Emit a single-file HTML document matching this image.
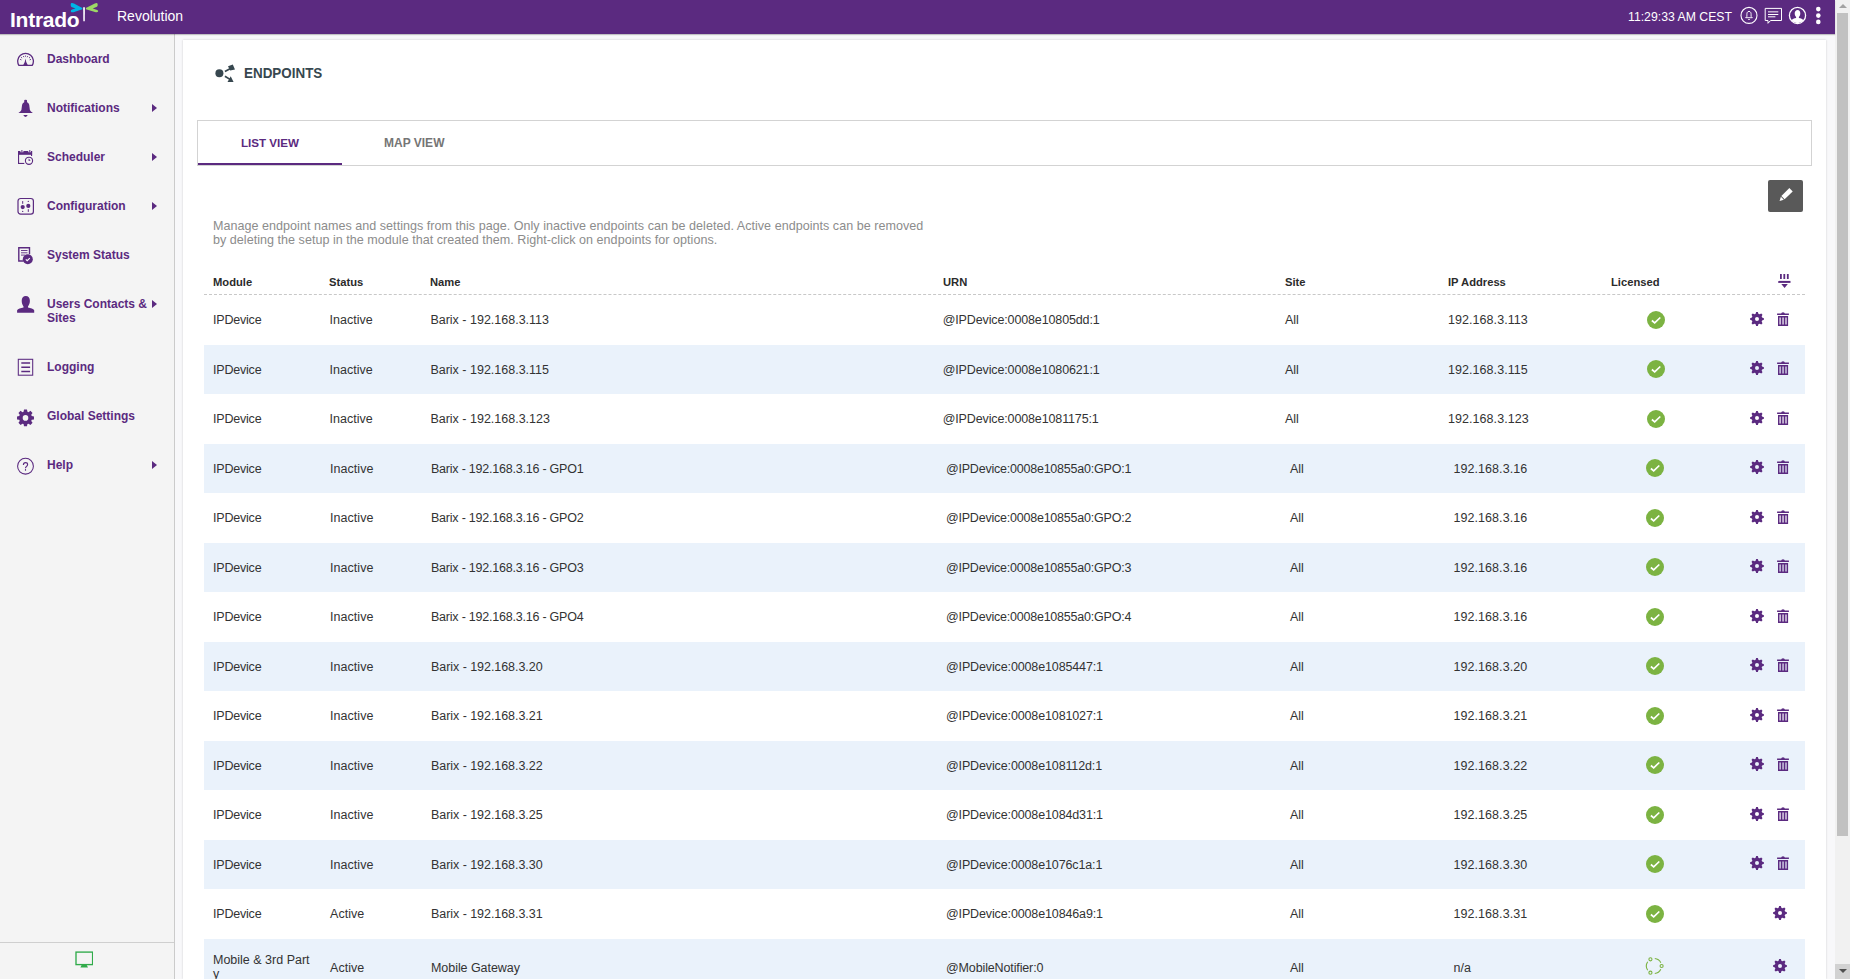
<!DOCTYPE html>
<html><head><meta charset="utf-8">
<style>
*{box-sizing:border-box;margin:0;padding:0}
html,body{width:1850px;height:979px;overflow:hidden;background:#f8f8fa;font-family:"Liberation Sans",sans-serif;}
.abs{position:absolute}
#top{position:absolute;left:0;top:0;width:1835px;height:34px;background:#5b2a80;box-shadow:0 1px 1px rgba(0,0,0,.22);z-index:5}
#side{position:absolute;left:0;top:34px;width:175px;height:945px;background:#f4f4f4;border-right:1px solid #cbcbcb}
.nav{position:absolute;left:47px;font-weight:bold;font-size:12px;color:#5b2a80;white-space:nowrap;line-height:14px}
.arr{position:absolute;left:152px;width:0;height:0;border-top:4px solid transparent;border-bottom:4px solid transparent;border-left:5px solid #5b2a80}
#card{position:absolute;left:183px;top:40px;width:1643px;height:939px;background:#fff;box-shadow:0 0 2px rgba(0,0,0,.18)}
.t{position:absolute;font-size:12.5px;color:#333;white-space:nowrap;line-height:14px}
.h{position:absolute;font-size:11.2px;font-weight:bold;color:#2b2b2b;white-space:nowrap;line-height:14px}
.rowbg{position:absolute;left:204px;width:1601px;background:#eaf2fb}
#sb{position:absolute;left:1835px;top:0;width:15px;height:979px;background:#f1f1f1}
</style></head><body>

<div id="top">
<div class="abs" style="left:10px;top:9px;font-size:21px;font-weight:bold;color:#fff;line-height:22px;letter-spacing:-0.25px">Intrado</div>
<svg class="abs" style="left:0px;top:0px" width="110" height="34" viewBox="0 0 110 34"><path d="M71.5 3.0Q72.6 2.8 74 3.4L82.3 7.9L82.3 9.2L73.5 12.2Q71.4 12.6 70.8 11.4Q70.6 10.1 72 9.6L75.5 8.4L71.5 6.9Q70.6 6.2 70.7 4.6Q70.8 3.2 71.5 3.0Z" fill="#00b4e6"/><path d="M96.4 3.0Q97.6 3.0 97.7 4.4Q97.8 6.2 96.9 6.8L92.8 8.5L97.2 9.9Q98.5 10.6 98.1 11.6Q97.5 12.6 95.8 12.2L85.9 9.3L85.9 8.1L94.8 3.4Q95.6 3.0 96.4 3.0Z" fill="#9dd866"/><path d="M83.2 7.6 Q84 6.6 84.9 7.6 L84.8 21.2 L83.3 21.2Z" fill="#fff"/></svg>
<div class="abs" style="left:117px;top:8px;font-size:14px;color:#fff;line-height:16px">Revolution</div>
<div class="abs" style="left:1628px;top:10px;font-size:12.25px;color:#fff;line-height:14px">11:29:33 AM CEST</div>
<svg class="abs" style="left:1735px;top:0" width="95" height="34" viewBox="0 0 95 34"><circle cx="14" cy="15.4" r="8" fill="none" stroke="#fff" stroke-width="1.1"/><path d="M14 11.4C12.4 11.4 11.9 12.8 11.9 14.3L11.9 16.4L10.7 17.7L17.3 17.7L16.1 16.4L16.1 14.3C16.1 12.8 15.6 11.4 14 11.4Z" fill="none" stroke="#fff" stroke-width="0.95"/><rect x="13.2" y="19" width="1.6" height="0.9" fill="#fff"/><path d="M30.2 8.4H46.5V20.5H35.6L33 23.3V20.5H30.2Z" fill="none" stroke="#fff" stroke-width="1"/><path d="M33 11.8H43.3" stroke="#fff" stroke-opacity=".7" stroke-width="1.4"/><path d="M33 14.5H43.3M33 16.8H40.4" stroke="#fff" stroke-width="1"/><circle cx="62.5" cy="15.4" r="8.1" fill="none" stroke="#fff" stroke-width="1.3"/><path d="M62.6 9.9C64.3 9.9 65.3 11.3 65.3 13.2C65.3 14.8 64.7 16.2 63.9 17L63.9 17.9C65.8 18.3 67.6 18.9 68.6 20.2A7.8 7.8 0 0 1 56.4 20.2C57.4 18.9 59.2 18.3 61.1 17.9L61.1 17C60.3 16.2 59.7 14.8 59.7 13.2C59.7 11.3 60.9 9.9 62.6 9.9Z" fill="#fff"/><circle cx="83.3" cy="9.1" r="2.3" fill="#fff"/><circle cx="83.3" cy="15.6" r="2.3" fill="#fff"/><circle cx="83.3" cy="21.9" r="2.3" fill="#fff"/></svg>
</div>
<div id="side"></div>
<div class="nav" style="top:51.5px">Dashboard</div>
<div class="nav" style="top:100.5px">Notifications</div>
<div class="arr" style="top:103.5px"></div>
<div class="nav" style="top:149.5px">Scheduler</div>
<div class="arr" style="top:152.5px"></div>
<div class="nav" style="top:198.5px">Configuration</div>
<div class="arr" style="top:201.5px"></div>
<div class="nav" style="top:247.5px">System Status</div>
<div class="nav" style="top:296.5px">Users Contacts &amp;<br>Sites</div>
<div class="arr" style="top:299.5px"></div>
<div class="nav" style="top:359.5px">Logging</div>
<div class="nav" style="top:408.5px">Global Settings</div>
<div class="nav" style="top:457.5px">Help</div>
<div class="arr" style="top:460.5px"></div>
<svg class="abs" style="left:17px;top:52px" width="18" height="15" viewBox="0 0 18 15"><path d="M1.9 13.4 A7.85 7.85 0 1 1 15.2 13.4 Z" fill="none" stroke="#5b2a80" stroke-width="1.3" stroke-linejoin="round"/><path d="M8.5 6.6 Q8.9 11 11 13.4 L6 13.4 Q8.1 11 8.5 6.6Z" fill="#5b2a80"/><path d="M3.2 7.4l1.2.5M4.2 5.3l.9.8M6.4 4.1l.5 1M8.55 3.6v1.1M10.7 4.2l-.5 1M12.9 5.3l-.9.8M13.9 7.4l-1.2.5" stroke="#5b2a80" stroke-width="1"/></svg>
<svg class="abs" style="left:17px;top:99px" width="17" height="19" viewBox="0 0 17 19"><path d="M7.3 0.9Q8.6 0.6 9.9 0.9L10.1 3.2Q11.8 3.8 12.2 5.8L12.9 11Q13.5 12.8 15.9 13.9L1.4 13.9Q3.8 12.8 4.4 11L5.1 5.8Q5.5 3.8 7.2 3.2Z" fill="#5b2a80"/><path d="M6.3 16.1L10.7 16.1Q10 17.9 8.5 17.9Q7 17.9 6.3 16.1Z" fill="#5b2a80"/></svg>
<svg class="abs" style="left:17px;top:149px" width="18" height="17" viewBox="0 0 18 17"><rect x="1" y="2" width="14.1" height="3.8" fill="#5b2a80"/><rect x="3.4" y="1" width="3" height="2.2" fill="#f4f4f4"/><rect x="11.3" y="1" width="3" height="2.2" fill="#f4f4f4"/><rect x="4.4" y="1" width="1" height="2.1" fill="#5b2a80"/><rect x="12.3" y="1" width="1" height="2.1" fill="#5b2a80"/><rect x="1" y="2" width="1.1" height="13" fill="#5b2a80"/><rect x="1" y="13.9" width="6.3" height="1.1" fill="#5b2a80"/><rect x="14" y="2" width="1.1" height="5" fill="#5b2a80"/><circle cx="12" cy="11.8" r="3.6" fill="#f4f4f4" stroke="#5b2a80" stroke-width="1.1"/><path d="M11.6 9.6L11.6 12.1L13.6 11.4Z" fill="#5b2a80"/></svg>
<svg class="abs" style="left:17px;top:197px" width="18" height="19" viewBox="0 0 18 19"><rect x="1" y="1.5" width="15.4" height="15.7" rx="2.6" fill="none" stroke="#5b2a80" stroke-width="1.2"/><path d="M5.7 4.1V6.8M11.3 12.2V14.9" stroke="#5b2a80" stroke-width="1"/><circle cx="5.7" cy="10.1" r="2.1" fill="#5b2a80"/><circle cx="11.3" cy="8.9" r="2.1" fill="#5b2a80"/><circle cx="5.7" cy="14.4" r=".65" fill="#5b2a80"/><circle cx="11.3" cy="4.4" r=".65" fill="#5b2a80"/></svg>
<svg class="abs" style="left:18px;top:247px" width="18" height="18" viewBox="0 0 18 18"><path d="M11.5 7V0.8H0.8V14H5.5" fill="none" stroke="#5b2a80" stroke-width="1.4"/><path d="M3 3.5h6.5M3 5.8h6.5M3 8.1h4" stroke="#5b2a80" stroke-width="0.9"/><circle cx="9.8" cy="12.3" r="5" fill="#5b2a80"/><path d="M7.8 12.4l1.4 1.3 2.6-2.6" fill="none" stroke="#fff" stroke-width="1.1"/></svg>
<svg class="abs" style="left:17px;top:295px" width="18" height="18" viewBox="0 0 18 18"><path d="M8.8 1C11.3 1 12.9 2.8 12.9 5.8C12.9 8 12 10.2 11 11.4L11 12.6C13.5 13.2 16.6 13.8 17.2 15.3L17.2 17.7L0.1 17.7L0.1 15.3C0.8 13.8 3.9 13.2 6.5 12.6L6.5 11.4C5.5 10.2 4.7 8 4.7 5.8C4.7 2.8 6.3 1 8.8 1Z" fill="#5b2a80"/></svg>
<svg class="abs" style="left:17px;top:358px" width="18" height="19" viewBox="0 0 18 19"><rect x="1.3" y="1.3" width="14.4" height="15.9" fill="none" stroke="#5b2a80" stroke-width="1.05"/><path d="M4.3 5H13.1M4.3 9.3H13.1M4.3 13.5H13.1" stroke="#5b2a80" stroke-width="1.6"/></svg>
<svg class="abs" style="left:17px;top:409px" width="18" height="19" viewBox="0 0 18 19"><path fill-rule="evenodd" fill="#5b2a80" d="M14.71 6.97 L16.97 7.41 L16.97 10.39 L14.71 10.83 L14.25 11.93 L15.54 13.84 L13.44 15.94 L11.53 14.65 L10.43 15.11 L9.99 17.37 L7.01 17.37 L6.57 15.11 L5.47 14.65 L3.56 15.94 L1.46 13.84 L2.75 11.93 L2.29 10.83 L0.03 10.39 L0.03 7.41 L2.29 6.97 L2.75 5.87 L1.46 3.96 L3.56 1.86 L5.47 3.15 L6.57 2.69 L7.01 0.43 L9.99 0.43 L10.43 2.69 L11.53 3.15 L13.44 1.86 L15.54 3.96 L14.25 5.87Z M8.50 6.10 A2.80 2.80 0 1 0 8.50 11.70 A2.80 2.80 0 1 0 8.50 6.10 Z"/></svg>
<svg class="abs" style="left:17px;top:457px" width="18" height="19" viewBox="0 0 18 19"><circle cx="8.5" cy="9.2" r="7.9" fill="none" stroke="#5b2a80" stroke-width="1.05"/><path d="M6.4 8Q6.4 5.6 8.5 5.6Q10.6 5.6 10.6 7.5Q10.6 8.7 9.5 9.4Q8.5 10 8.5 11.2" fill="none" stroke="#5b2a80" stroke-width="1.15"/><rect x="7.95" y="12.1" width="1.1" height="1.6" fill="#5b2a80"/></svg>
<div class="abs" style="left:0;top:942px;width:174px;height:1px;background:#cfcfcf"></div>
<svg class="abs" style="left:75px;top:951px" width="18" height="17" viewBox="0 0 18 17"><rect x="1" y="1.1" width="16.6" height="12.5" fill="none" stroke="#30ab4a" stroke-width="1.35"/><path d="M5.4 16.6h7.6l-1.3-2.6H6.6z" fill="#30ab4a"/></svg>
<div id="card"></div>
<svg class="abs" style="left:212px;top:60px" width="28" height="26" viewBox="0 0 28 26"><circle cx="7.4" cy="13.3" r="4" fill="#37474f"/><path d="M12.9 11.6L18.5 8.6M12.9 16.2L18 19.4" stroke="#37474f" stroke-width="1.7"/><path d="M16 6.3L20.8 4.4L23 9.4L18.2 10.6Z" fill="#37474f"/><path d="M15.5 21.9L21.6 21.9L18.7 16.3Z" fill="#37474f"/></svg>
<div class="abs" style="left:244px;top:65px;font-size:15px;font-weight:bold;color:#37474f;line-height:16px;transform:scaleX(0.895);transform-origin:0 0">ENDPOINTS</div>
<div class="abs" style="left:197px;top:120px;width:1615px;height:46px;border:1px solid #d3d3d3;background:#fff"></div>
<div class="abs" style="left:198px;top:163px;width:144px;height:2px;background:#5b2a80"></div>
<div class="abs" style="left:241px;top:136px;font-size:11.6px;font-weight:bold;color:#5b2a80;line-height:14px">LIST VIEW</div>
<div class="abs" style="left:384px;top:136px;font-size:12px;font-weight:bold;color:#757575;line-height:14px">MAP VIEW</div>
<div class="abs" style="left:1768px;top:180px;width:35px;height:32px;background:#595959;border-radius:2px"></div>
<svg class="abs" style="left:1778.5px;top:188px" width="14" height="14" viewBox="0 0 14 14"><path d="M10.4 0.1L13.7 3.4L5.6 11.2L2.4 8Z" fill="#fff"/><path d="M1.9 8.8L4.8 11.7L0.6 13Z" fill="#fff"/></svg>
<div class="abs" style="left:213px;top:218.5px;font-size:12.55px;color:#8c8c8c;line-height:14px;letter-spacing:0.03px;white-space:nowrap">Manage endpoint names and settings from this page. Only inactive endpoints can be deleted. Active endpoints can be removed<br>by deleting the setup in the module that created them. Right-click on endpoints for options.</div>
<div class="h" style="left:213px;top:275px">Module</div>
<div class="h" style="left:329px;top:275px">Status</div>
<div class="h" style="left:430px;top:275px">Name</div>
<div class="h" style="left:943px;top:275px">URN</div>
<div class="h" style="left:1285px;top:275px">Site</div>
<div class="h" style="left:1448px;top:275px">IP Address</div>
<div class="h" style="left:1611px;top:275px">Licensed</div>
<svg class="abs" style="left:1778px;top:274px" width="13" height="15" viewBox="0 0 13 15"><path d="M2.9 0v5M6.3 0v5M9.8 0v5" stroke="#5b2a80" stroke-width="1.8"/><path d="M0.3 7.9h12.2" stroke="#5b2a80" stroke-width="2"/><path d="M3.3 10h6.5l-3.25 4z" fill="#5b2a80"/></svg>
<div class="abs" style="left:204px;top:294px;width:1601px;height:0;border-top:1px dashed #c8c8c8"></div>
<div class="t" style="left:213.0px;top:312.5px;letter-spacing:-0.2px">IPDevice</div>
<div class="t" style="left:329.4px;top:312.5px;letter-spacing:0.05px">Inactive</div>
<div class="t" style="left:430.4px;top:312.5px;letter-spacing:0.00px">Barix - 192.168.3.113</div>
<div class="t" style="left:942.7px;top:312.5px;letter-spacing:-0.13px">@IPDevice:0008e10805dd:1</div>
<div class="t" style="left:1285.0px;top:312.5px;letter-spacing:0.00px">All</div>
<div class="t" style="left:1448.0px;top:312.5px;letter-spacing:0.06px">192.168.3.113</div>
<svg style="position:absolute;left:1647.0px;top:310.5px" width="18" height="18" viewBox="0 0 18 18"><circle cx="9" cy="9" r="9" fill="#7cb342"/><path d="M4.9 9.5L7.7 11.9L13.3 6.5" fill="none" stroke="#fff" stroke-width="1.7"/></svg>
<svg style="position:absolute;left:1750.20px;top:312.05px" width="14" height="14" viewBox="0 0 14 14"><path fill="#5b2a80" fill-rule="evenodd" d="M12.08 5.48 L13.90 6.17 L13.90 7.83 L12.08 8.52 L11.66 9.52 L12.47 11.29 L11.29 12.47 L9.52 11.66 L8.52 12.08 L7.83 13.90 L6.17 13.90 L5.48 12.08 L4.48 11.66 L2.71 12.47 L1.53 11.29 L2.34 9.52 L1.92 8.52 L0.10 7.83 L0.10 6.17 L1.92 5.48 L2.34 4.48 L1.53 2.71 L2.71 1.53 L4.48 2.34 L5.48 1.92 L6.17 0.10 L7.83 0.10 L8.52 1.92 L9.52 2.34 L11.29 1.53 L12.47 2.71 L11.66 4.48Z M7 5 A2 2 0 1 0 7 9 A2 2 0 1 0 7 5Z"/></svg>
<svg style="position:absolute;left:1777.00px;top:312.30px" width="13" height="14" viewBox="0 0 13 14"><path fill="#5b2a80" d="M0.1 1.6H11.9V2.9H0.1Z M4 1.8Q4.3 0.3 6 0.3Q7.7 0.3 8 1.8Z"/><path fill="#5b2a80" fill-rule="evenodd" d="M1 4H11.1V13.9H1Z M2.5 5.6h1.2v6.8h-1.2z M5.45 5.6h1.2v6.8h-1.2z M8.4 5.6h1.2v6.8h-1.2z"/></svg>
<div class="rowbg" style="top:345px;height:49px"></div>
<div class="t" style="left:213.0px;top:362.5px;letter-spacing:-0.2px">IPDevice</div>
<div class="t" style="left:329.4px;top:362.5px;letter-spacing:0.05px">Inactive</div>
<div class="t" style="left:430.4px;top:362.5px;letter-spacing:0.00px">Barix - 192.168.3.115</div>
<div class="t" style="left:942.7px;top:362.5px;letter-spacing:-0.13px">@IPDevice:0008e1080621:1</div>
<div class="t" style="left:1285.0px;top:362.5px;letter-spacing:0.00px">All</div>
<div class="t" style="left:1448.0px;top:362.5px;letter-spacing:0.06px">192.168.3.115</div>
<svg style="position:absolute;left:1647.0px;top:359.5px" width="18" height="18" viewBox="0 0 18 18"><circle cx="9" cy="9" r="9" fill="#7cb342"/><path d="M4.9 9.5L7.7 11.9L13.3 6.5" fill="none" stroke="#fff" stroke-width="1.7"/></svg>
<svg style="position:absolute;left:1750.20px;top:361.05px" width="14" height="14" viewBox="0 0 14 14"><path fill="#5b2a80" fill-rule="evenodd" d="M12.08 5.48 L13.90 6.17 L13.90 7.83 L12.08 8.52 L11.66 9.52 L12.47 11.29 L11.29 12.47 L9.52 11.66 L8.52 12.08 L7.83 13.90 L6.17 13.90 L5.48 12.08 L4.48 11.66 L2.71 12.47 L1.53 11.29 L2.34 9.52 L1.92 8.52 L0.10 7.83 L0.10 6.17 L1.92 5.48 L2.34 4.48 L1.53 2.71 L2.71 1.53 L4.48 2.34 L5.48 1.92 L6.17 0.10 L7.83 0.10 L8.52 1.92 L9.52 2.34 L11.29 1.53 L12.47 2.71 L11.66 4.48Z M7 5 A2 2 0 1 0 7 9 A2 2 0 1 0 7 5Z"/></svg>
<svg style="position:absolute;left:1777.00px;top:361.30px" width="13" height="14" viewBox="0 0 13 14"><path fill="#5b2a80" d="M0.1 1.6H11.9V2.9H0.1Z M4 1.8Q4.3 0.3 6 0.3Q7.7 0.3 8 1.8Z"/><path fill="#5b2a80" fill-rule="evenodd" d="M1 4H11.1V13.9H1Z M2.5 5.6h1.2v6.8h-1.2z M5.45 5.6h1.2v6.8h-1.2z M8.4 5.6h1.2v6.8h-1.2z"/></svg>
<div class="t" style="left:213.0px;top:411.5px;letter-spacing:-0.2px">IPDevice</div>
<div class="t" style="left:329.4px;top:411.5px;letter-spacing:0.05px">Inactive</div>
<div class="t" style="left:430.4px;top:411.5px;letter-spacing:0.00px">Barix - 192.168.3.123</div>
<div class="t" style="left:942.7px;top:411.5px;letter-spacing:-0.13px">@IPDevice:0008e1081175:1</div>
<div class="t" style="left:1285.0px;top:411.5px;letter-spacing:0.00px">All</div>
<div class="t" style="left:1448.0px;top:411.5px;letter-spacing:0.06px">192.168.3.123</div>
<svg style="position:absolute;left:1647.0px;top:409.5px" width="18" height="18" viewBox="0 0 18 18"><circle cx="9" cy="9" r="9" fill="#7cb342"/><path d="M4.9 9.5L7.7 11.9L13.3 6.5" fill="none" stroke="#fff" stroke-width="1.7"/></svg>
<svg style="position:absolute;left:1750.20px;top:411.05px" width="14" height="14" viewBox="0 0 14 14"><path fill="#5b2a80" fill-rule="evenodd" d="M12.08 5.48 L13.90 6.17 L13.90 7.83 L12.08 8.52 L11.66 9.52 L12.47 11.29 L11.29 12.47 L9.52 11.66 L8.52 12.08 L7.83 13.90 L6.17 13.90 L5.48 12.08 L4.48 11.66 L2.71 12.47 L1.53 11.29 L2.34 9.52 L1.92 8.52 L0.10 7.83 L0.10 6.17 L1.92 5.48 L2.34 4.48 L1.53 2.71 L2.71 1.53 L4.48 2.34 L5.48 1.92 L6.17 0.10 L7.83 0.10 L8.52 1.92 L9.52 2.34 L11.29 1.53 L12.47 2.71 L11.66 4.48Z M7 5 A2 2 0 1 0 7 9 A2 2 0 1 0 7 5Z"/></svg>
<svg style="position:absolute;left:1777.00px;top:411.30px" width="13" height="14" viewBox="0 0 13 14"><path fill="#5b2a80" d="M0.1 1.6H11.9V2.9H0.1Z M4 1.8Q4.3 0.3 6 0.3Q7.7 0.3 8 1.8Z"/><path fill="#5b2a80" fill-rule="evenodd" d="M1 4H11.1V13.9H1Z M2.5 5.6h1.2v6.8h-1.2z M5.45 5.6h1.2v6.8h-1.2z M8.4 5.6h1.2v6.8h-1.2z"/></svg>
<div class="rowbg" style="top:444px;height:49px"></div>
<div class="t" style="left:213.0px;top:461.5px;letter-spacing:-0.2px">IPDevice</div>
<div class="t" style="left:330.0px;top:461.5px;letter-spacing:0.05px">Inactive</div>
<div class="t" style="left:431.0px;top:461.5px;letter-spacing:-0.22px">Barix - 192.168.3.16 - GPO1</div>
<div class="t" style="left:946.0px;top:461.5px;letter-spacing:-0.22px">@IPDevice:0008e10855a0:GPO:1</div>
<div class="t" style="left:1290.0px;top:461.5px;letter-spacing:0.00px">All</div>
<div class="t" style="left:1453.5px;top:461.5px;letter-spacing:0.06px">192.168.3.16</div>
<svg style="position:absolute;left:1646.0px;top:458.5px" width="18" height="18" viewBox="0 0 18 18"><circle cx="9" cy="9" r="9" fill="#7cb342"/><path d="M4.9 9.5L7.7 11.9L13.3 6.5" fill="none" stroke="#fff" stroke-width="1.7"/></svg>
<svg style="position:absolute;left:1750.20px;top:460.05px" width="14" height="14" viewBox="0 0 14 14"><path fill="#5b2a80" fill-rule="evenodd" d="M12.08 5.48 L13.90 6.17 L13.90 7.83 L12.08 8.52 L11.66 9.52 L12.47 11.29 L11.29 12.47 L9.52 11.66 L8.52 12.08 L7.83 13.90 L6.17 13.90 L5.48 12.08 L4.48 11.66 L2.71 12.47 L1.53 11.29 L2.34 9.52 L1.92 8.52 L0.10 7.83 L0.10 6.17 L1.92 5.48 L2.34 4.48 L1.53 2.71 L2.71 1.53 L4.48 2.34 L5.48 1.92 L6.17 0.10 L7.83 0.10 L8.52 1.92 L9.52 2.34 L11.29 1.53 L12.47 2.71 L11.66 4.48Z M7 5 A2 2 0 1 0 7 9 A2 2 0 1 0 7 5Z"/></svg>
<svg style="position:absolute;left:1777.00px;top:460.30px" width="13" height="14" viewBox="0 0 13 14"><path fill="#5b2a80" d="M0.1 1.6H11.9V2.9H0.1Z M4 1.8Q4.3 0.3 6 0.3Q7.7 0.3 8 1.8Z"/><path fill="#5b2a80" fill-rule="evenodd" d="M1 4H11.1V13.9H1Z M2.5 5.6h1.2v6.8h-1.2z M5.45 5.6h1.2v6.8h-1.2z M8.4 5.6h1.2v6.8h-1.2z"/></svg>
<div class="t" style="left:213.0px;top:510.5px;letter-spacing:-0.2px">IPDevice</div>
<div class="t" style="left:330.0px;top:510.5px;letter-spacing:0.05px">Inactive</div>
<div class="t" style="left:431.0px;top:510.5px;letter-spacing:-0.22px">Barix - 192.168.3.16 - GPO2</div>
<div class="t" style="left:946.0px;top:510.5px;letter-spacing:-0.22px">@IPDevice:0008e10855a0:GPO:2</div>
<div class="t" style="left:1290.0px;top:510.5px;letter-spacing:0.00px">All</div>
<div class="t" style="left:1453.5px;top:510.5px;letter-spacing:0.06px">192.168.3.16</div>
<svg style="position:absolute;left:1646.0px;top:508.5px" width="18" height="18" viewBox="0 0 18 18"><circle cx="9" cy="9" r="9" fill="#7cb342"/><path d="M4.9 9.5L7.7 11.9L13.3 6.5" fill="none" stroke="#fff" stroke-width="1.7"/></svg>
<svg style="position:absolute;left:1750.20px;top:510.05px" width="14" height="14" viewBox="0 0 14 14"><path fill="#5b2a80" fill-rule="evenodd" d="M12.08 5.48 L13.90 6.17 L13.90 7.83 L12.08 8.52 L11.66 9.52 L12.47 11.29 L11.29 12.47 L9.52 11.66 L8.52 12.08 L7.83 13.90 L6.17 13.90 L5.48 12.08 L4.48 11.66 L2.71 12.47 L1.53 11.29 L2.34 9.52 L1.92 8.52 L0.10 7.83 L0.10 6.17 L1.92 5.48 L2.34 4.48 L1.53 2.71 L2.71 1.53 L4.48 2.34 L5.48 1.92 L6.17 0.10 L7.83 0.10 L8.52 1.92 L9.52 2.34 L11.29 1.53 L12.47 2.71 L11.66 4.48Z M7 5 A2 2 0 1 0 7 9 A2 2 0 1 0 7 5Z"/></svg>
<svg style="position:absolute;left:1777.00px;top:510.30px" width="13" height="14" viewBox="0 0 13 14"><path fill="#5b2a80" d="M0.1 1.6H11.9V2.9H0.1Z M4 1.8Q4.3 0.3 6 0.3Q7.7 0.3 8 1.8Z"/><path fill="#5b2a80" fill-rule="evenodd" d="M1 4H11.1V13.9H1Z M2.5 5.6h1.2v6.8h-1.2z M5.45 5.6h1.2v6.8h-1.2z M8.4 5.6h1.2v6.8h-1.2z"/></svg>
<div class="rowbg" style="top:543px;height:49px"></div>
<div class="t" style="left:213.0px;top:560.5px;letter-spacing:-0.2px">IPDevice</div>
<div class="t" style="left:330.0px;top:560.5px;letter-spacing:0.05px">Inactive</div>
<div class="t" style="left:431.0px;top:560.5px;letter-spacing:-0.22px">Barix - 192.168.3.16 - GPO3</div>
<div class="t" style="left:946.0px;top:560.5px;letter-spacing:-0.22px">@IPDevice:0008e10855a0:GPO:3</div>
<div class="t" style="left:1290.0px;top:560.5px;letter-spacing:0.00px">All</div>
<div class="t" style="left:1453.5px;top:560.5px;letter-spacing:0.06px">192.168.3.16</div>
<svg style="position:absolute;left:1646.0px;top:557.5px" width="18" height="18" viewBox="0 0 18 18"><circle cx="9" cy="9" r="9" fill="#7cb342"/><path d="M4.9 9.5L7.7 11.9L13.3 6.5" fill="none" stroke="#fff" stroke-width="1.7"/></svg>
<svg style="position:absolute;left:1750.20px;top:559.05px" width="14" height="14" viewBox="0 0 14 14"><path fill="#5b2a80" fill-rule="evenodd" d="M12.08 5.48 L13.90 6.17 L13.90 7.83 L12.08 8.52 L11.66 9.52 L12.47 11.29 L11.29 12.47 L9.52 11.66 L8.52 12.08 L7.83 13.90 L6.17 13.90 L5.48 12.08 L4.48 11.66 L2.71 12.47 L1.53 11.29 L2.34 9.52 L1.92 8.52 L0.10 7.83 L0.10 6.17 L1.92 5.48 L2.34 4.48 L1.53 2.71 L2.71 1.53 L4.48 2.34 L5.48 1.92 L6.17 0.10 L7.83 0.10 L8.52 1.92 L9.52 2.34 L11.29 1.53 L12.47 2.71 L11.66 4.48Z M7 5 A2 2 0 1 0 7 9 A2 2 0 1 0 7 5Z"/></svg>
<svg style="position:absolute;left:1777.00px;top:559.30px" width="13" height="14" viewBox="0 0 13 14"><path fill="#5b2a80" d="M0.1 1.6H11.9V2.9H0.1Z M4 1.8Q4.3 0.3 6 0.3Q7.7 0.3 8 1.8Z"/><path fill="#5b2a80" fill-rule="evenodd" d="M1 4H11.1V13.9H1Z M2.5 5.6h1.2v6.8h-1.2z M5.45 5.6h1.2v6.8h-1.2z M8.4 5.6h1.2v6.8h-1.2z"/></svg>
<div class="t" style="left:213.0px;top:609.5px;letter-spacing:-0.2px">IPDevice</div>
<div class="t" style="left:330.0px;top:609.5px;letter-spacing:0.05px">Inactive</div>
<div class="t" style="left:431.0px;top:609.5px;letter-spacing:-0.22px">Barix - 192.168.3.16 - GPO4</div>
<div class="t" style="left:946.0px;top:609.5px;letter-spacing:-0.22px">@IPDevice:0008e10855a0:GPO:4</div>
<div class="t" style="left:1290.0px;top:609.5px;letter-spacing:0.00px">All</div>
<div class="t" style="left:1453.5px;top:609.5px;letter-spacing:0.06px">192.168.3.16</div>
<svg style="position:absolute;left:1646.0px;top:607.5px" width="18" height="18" viewBox="0 0 18 18"><circle cx="9" cy="9" r="9" fill="#7cb342"/><path d="M4.9 9.5L7.7 11.9L13.3 6.5" fill="none" stroke="#fff" stroke-width="1.7"/></svg>
<svg style="position:absolute;left:1750.20px;top:609.05px" width="14" height="14" viewBox="0 0 14 14"><path fill="#5b2a80" fill-rule="evenodd" d="M12.08 5.48 L13.90 6.17 L13.90 7.83 L12.08 8.52 L11.66 9.52 L12.47 11.29 L11.29 12.47 L9.52 11.66 L8.52 12.08 L7.83 13.90 L6.17 13.90 L5.48 12.08 L4.48 11.66 L2.71 12.47 L1.53 11.29 L2.34 9.52 L1.92 8.52 L0.10 7.83 L0.10 6.17 L1.92 5.48 L2.34 4.48 L1.53 2.71 L2.71 1.53 L4.48 2.34 L5.48 1.92 L6.17 0.10 L7.83 0.10 L8.52 1.92 L9.52 2.34 L11.29 1.53 L12.47 2.71 L11.66 4.48Z M7 5 A2 2 0 1 0 7 9 A2 2 0 1 0 7 5Z"/></svg>
<svg style="position:absolute;left:1777.00px;top:609.30px" width="13" height="14" viewBox="0 0 13 14"><path fill="#5b2a80" d="M0.1 1.6H11.9V2.9H0.1Z M4 1.8Q4.3 0.3 6 0.3Q7.7 0.3 8 1.8Z"/><path fill="#5b2a80" fill-rule="evenodd" d="M1 4H11.1V13.9H1Z M2.5 5.6h1.2v6.8h-1.2z M5.45 5.6h1.2v6.8h-1.2z M8.4 5.6h1.2v6.8h-1.2z"/></svg>
<div class="rowbg" style="top:642px;height:49px"></div>
<div class="t" style="left:213.0px;top:659.5px;letter-spacing:-0.2px">IPDevice</div>
<div class="t" style="left:330.0px;top:659.5px;letter-spacing:0.05px">Inactive</div>
<div class="t" style="left:431.0px;top:659.5px;letter-spacing:-0.05px">Barix - 192.168.3.20</div>
<div class="t" style="left:946.0px;top:659.5px;letter-spacing:-0.13px">@IPDevice:0008e1085447:1</div>
<div class="t" style="left:1290.0px;top:659.5px;letter-spacing:0.00px">All</div>
<div class="t" style="left:1453.5px;top:659.5px;letter-spacing:0.06px">192.168.3.20</div>
<svg style="position:absolute;left:1646.0px;top:656.5px" width="18" height="18" viewBox="0 0 18 18"><circle cx="9" cy="9" r="9" fill="#7cb342"/><path d="M4.9 9.5L7.7 11.9L13.3 6.5" fill="none" stroke="#fff" stroke-width="1.7"/></svg>
<svg style="position:absolute;left:1750.20px;top:658.05px" width="14" height="14" viewBox="0 0 14 14"><path fill="#5b2a80" fill-rule="evenodd" d="M12.08 5.48 L13.90 6.17 L13.90 7.83 L12.08 8.52 L11.66 9.52 L12.47 11.29 L11.29 12.47 L9.52 11.66 L8.52 12.08 L7.83 13.90 L6.17 13.90 L5.48 12.08 L4.48 11.66 L2.71 12.47 L1.53 11.29 L2.34 9.52 L1.92 8.52 L0.10 7.83 L0.10 6.17 L1.92 5.48 L2.34 4.48 L1.53 2.71 L2.71 1.53 L4.48 2.34 L5.48 1.92 L6.17 0.10 L7.83 0.10 L8.52 1.92 L9.52 2.34 L11.29 1.53 L12.47 2.71 L11.66 4.48Z M7 5 A2 2 0 1 0 7 9 A2 2 0 1 0 7 5Z"/></svg>
<svg style="position:absolute;left:1777.00px;top:658.30px" width="13" height="14" viewBox="0 0 13 14"><path fill="#5b2a80" d="M0.1 1.6H11.9V2.9H0.1Z M4 1.8Q4.3 0.3 6 0.3Q7.7 0.3 8 1.8Z"/><path fill="#5b2a80" fill-rule="evenodd" d="M1 4H11.1V13.9H1Z M2.5 5.6h1.2v6.8h-1.2z M5.45 5.6h1.2v6.8h-1.2z M8.4 5.6h1.2v6.8h-1.2z"/></svg>
<div class="t" style="left:213.0px;top:708.5px;letter-spacing:-0.2px">IPDevice</div>
<div class="t" style="left:330.0px;top:708.5px;letter-spacing:0.05px">Inactive</div>
<div class="t" style="left:431.0px;top:708.5px;letter-spacing:-0.05px">Barix - 192.168.3.21</div>
<div class="t" style="left:946.0px;top:708.5px;letter-spacing:-0.13px">@IPDevice:0008e1081027:1</div>
<div class="t" style="left:1290.0px;top:708.5px;letter-spacing:0.00px">All</div>
<div class="t" style="left:1453.5px;top:708.5px;letter-spacing:0.06px">192.168.3.21</div>
<svg style="position:absolute;left:1646.0px;top:706.5px" width="18" height="18" viewBox="0 0 18 18"><circle cx="9" cy="9" r="9" fill="#7cb342"/><path d="M4.9 9.5L7.7 11.9L13.3 6.5" fill="none" stroke="#fff" stroke-width="1.7"/></svg>
<svg style="position:absolute;left:1750.20px;top:708.05px" width="14" height="14" viewBox="0 0 14 14"><path fill="#5b2a80" fill-rule="evenodd" d="M12.08 5.48 L13.90 6.17 L13.90 7.83 L12.08 8.52 L11.66 9.52 L12.47 11.29 L11.29 12.47 L9.52 11.66 L8.52 12.08 L7.83 13.90 L6.17 13.90 L5.48 12.08 L4.48 11.66 L2.71 12.47 L1.53 11.29 L2.34 9.52 L1.92 8.52 L0.10 7.83 L0.10 6.17 L1.92 5.48 L2.34 4.48 L1.53 2.71 L2.71 1.53 L4.48 2.34 L5.48 1.92 L6.17 0.10 L7.83 0.10 L8.52 1.92 L9.52 2.34 L11.29 1.53 L12.47 2.71 L11.66 4.48Z M7 5 A2 2 0 1 0 7 9 A2 2 0 1 0 7 5Z"/></svg>
<svg style="position:absolute;left:1777.00px;top:708.30px" width="13" height="14" viewBox="0 0 13 14"><path fill="#5b2a80" d="M0.1 1.6H11.9V2.9H0.1Z M4 1.8Q4.3 0.3 6 0.3Q7.7 0.3 8 1.8Z"/><path fill="#5b2a80" fill-rule="evenodd" d="M1 4H11.1V13.9H1Z M2.5 5.6h1.2v6.8h-1.2z M5.45 5.6h1.2v6.8h-1.2z M8.4 5.6h1.2v6.8h-1.2z"/></svg>
<div class="rowbg" style="top:741px;height:49px"></div>
<div class="t" style="left:213.0px;top:758.5px;letter-spacing:-0.2px">IPDevice</div>
<div class="t" style="left:330.0px;top:758.5px;letter-spacing:0.05px">Inactive</div>
<div class="t" style="left:431.0px;top:758.5px;letter-spacing:-0.05px">Barix - 192.168.3.22</div>
<div class="t" style="left:946.0px;top:758.5px;letter-spacing:-0.13px">@IPDevice:0008e108112d:1</div>
<div class="t" style="left:1290.0px;top:758.5px;letter-spacing:0.00px">All</div>
<div class="t" style="left:1453.5px;top:758.5px;letter-spacing:0.06px">192.168.3.22</div>
<svg style="position:absolute;left:1646.0px;top:755.5px" width="18" height="18" viewBox="0 0 18 18"><circle cx="9" cy="9" r="9" fill="#7cb342"/><path d="M4.9 9.5L7.7 11.9L13.3 6.5" fill="none" stroke="#fff" stroke-width="1.7"/></svg>
<svg style="position:absolute;left:1750.20px;top:757.05px" width="14" height="14" viewBox="0 0 14 14"><path fill="#5b2a80" fill-rule="evenodd" d="M12.08 5.48 L13.90 6.17 L13.90 7.83 L12.08 8.52 L11.66 9.52 L12.47 11.29 L11.29 12.47 L9.52 11.66 L8.52 12.08 L7.83 13.90 L6.17 13.90 L5.48 12.08 L4.48 11.66 L2.71 12.47 L1.53 11.29 L2.34 9.52 L1.92 8.52 L0.10 7.83 L0.10 6.17 L1.92 5.48 L2.34 4.48 L1.53 2.71 L2.71 1.53 L4.48 2.34 L5.48 1.92 L6.17 0.10 L7.83 0.10 L8.52 1.92 L9.52 2.34 L11.29 1.53 L12.47 2.71 L11.66 4.48Z M7 5 A2 2 0 1 0 7 9 A2 2 0 1 0 7 5Z"/></svg>
<svg style="position:absolute;left:1777.00px;top:757.30px" width="13" height="14" viewBox="0 0 13 14"><path fill="#5b2a80" d="M0.1 1.6H11.9V2.9H0.1Z M4 1.8Q4.3 0.3 6 0.3Q7.7 0.3 8 1.8Z"/><path fill="#5b2a80" fill-rule="evenodd" d="M1 4H11.1V13.9H1Z M2.5 5.6h1.2v6.8h-1.2z M5.45 5.6h1.2v6.8h-1.2z M8.4 5.6h1.2v6.8h-1.2z"/></svg>
<div class="t" style="left:213.0px;top:807.5px;letter-spacing:-0.2px">IPDevice</div>
<div class="t" style="left:330.0px;top:807.5px;letter-spacing:0.05px">Inactive</div>
<div class="t" style="left:431.0px;top:807.5px;letter-spacing:-0.05px">Barix - 192.168.3.25</div>
<div class="t" style="left:946.0px;top:807.5px;letter-spacing:-0.13px">@IPDevice:0008e1084d31:1</div>
<div class="t" style="left:1290.0px;top:807.5px;letter-spacing:0.00px">All</div>
<div class="t" style="left:1453.5px;top:807.5px;letter-spacing:0.06px">192.168.3.25</div>
<svg style="position:absolute;left:1646.0px;top:805.5px" width="18" height="18" viewBox="0 0 18 18"><circle cx="9" cy="9" r="9" fill="#7cb342"/><path d="M4.9 9.5L7.7 11.9L13.3 6.5" fill="none" stroke="#fff" stroke-width="1.7"/></svg>
<svg style="position:absolute;left:1750.20px;top:807.05px" width="14" height="14" viewBox="0 0 14 14"><path fill="#5b2a80" fill-rule="evenodd" d="M12.08 5.48 L13.90 6.17 L13.90 7.83 L12.08 8.52 L11.66 9.52 L12.47 11.29 L11.29 12.47 L9.52 11.66 L8.52 12.08 L7.83 13.90 L6.17 13.90 L5.48 12.08 L4.48 11.66 L2.71 12.47 L1.53 11.29 L2.34 9.52 L1.92 8.52 L0.10 7.83 L0.10 6.17 L1.92 5.48 L2.34 4.48 L1.53 2.71 L2.71 1.53 L4.48 2.34 L5.48 1.92 L6.17 0.10 L7.83 0.10 L8.52 1.92 L9.52 2.34 L11.29 1.53 L12.47 2.71 L11.66 4.48Z M7 5 A2 2 0 1 0 7 9 A2 2 0 1 0 7 5Z"/></svg>
<svg style="position:absolute;left:1777.00px;top:807.30px" width="13" height="14" viewBox="0 0 13 14"><path fill="#5b2a80" d="M0.1 1.6H11.9V2.9H0.1Z M4 1.8Q4.3 0.3 6 0.3Q7.7 0.3 8 1.8Z"/><path fill="#5b2a80" fill-rule="evenodd" d="M1 4H11.1V13.9H1Z M2.5 5.6h1.2v6.8h-1.2z M5.45 5.6h1.2v6.8h-1.2z M8.4 5.6h1.2v6.8h-1.2z"/></svg>
<div class="rowbg" style="top:840px;height:49px"></div>
<div class="t" style="left:213.0px;top:857.5px;letter-spacing:-0.2px">IPDevice</div>
<div class="t" style="left:330.0px;top:857.5px;letter-spacing:0.05px">Inactive</div>
<div class="t" style="left:431.0px;top:857.5px;letter-spacing:-0.05px">Barix - 192.168.3.30</div>
<div class="t" style="left:946.0px;top:857.5px;letter-spacing:-0.13px">@IPDevice:0008e1076c1a:1</div>
<div class="t" style="left:1290.0px;top:857.5px;letter-spacing:0.00px">All</div>
<div class="t" style="left:1453.5px;top:857.5px;letter-spacing:0.06px">192.168.3.30</div>
<svg style="position:absolute;left:1646.0px;top:854.5px" width="18" height="18" viewBox="0 0 18 18"><circle cx="9" cy="9" r="9" fill="#7cb342"/><path d="M4.9 9.5L7.7 11.9L13.3 6.5" fill="none" stroke="#fff" stroke-width="1.7"/></svg>
<svg style="position:absolute;left:1750.20px;top:856.05px" width="14" height="14" viewBox="0 0 14 14"><path fill="#5b2a80" fill-rule="evenodd" d="M12.08 5.48 L13.90 6.17 L13.90 7.83 L12.08 8.52 L11.66 9.52 L12.47 11.29 L11.29 12.47 L9.52 11.66 L8.52 12.08 L7.83 13.90 L6.17 13.90 L5.48 12.08 L4.48 11.66 L2.71 12.47 L1.53 11.29 L2.34 9.52 L1.92 8.52 L0.10 7.83 L0.10 6.17 L1.92 5.48 L2.34 4.48 L1.53 2.71 L2.71 1.53 L4.48 2.34 L5.48 1.92 L6.17 0.10 L7.83 0.10 L8.52 1.92 L9.52 2.34 L11.29 1.53 L12.47 2.71 L11.66 4.48Z M7 5 A2 2 0 1 0 7 9 A2 2 0 1 0 7 5Z"/></svg>
<svg style="position:absolute;left:1777.00px;top:856.30px" width="13" height="14" viewBox="0 0 13 14"><path fill="#5b2a80" d="M0.1 1.6H11.9V2.9H0.1Z M4 1.8Q4.3 0.3 6 0.3Q7.7 0.3 8 1.8Z"/><path fill="#5b2a80" fill-rule="evenodd" d="M1 4H11.1V13.9H1Z M2.5 5.6h1.2v6.8h-1.2z M5.45 5.6h1.2v6.8h-1.2z M8.4 5.6h1.2v6.8h-1.2z"/></svg>
<div class="t" style="left:213.0px;top:906.5px;letter-spacing:-0.2px">IPDevice</div>
<div class="t" style="left:330.0px;top:906.5px;letter-spacing:0.05px">Active</div>
<div class="t" style="left:431.0px;top:906.5px;letter-spacing:-0.05px">Barix - 192.168.3.31</div>
<div class="t" style="left:946.0px;top:906.5px;letter-spacing:-0.13px">@IPDevice:0008e10846a9:1</div>
<div class="t" style="left:1290.0px;top:906.5px;letter-spacing:0.00px">All</div>
<div class="t" style="left:1453.5px;top:906.5px;letter-spacing:0.06px">192.168.3.31</div>
<svg style="position:absolute;left:1646.0px;top:904.5px" width="18" height="18" viewBox="0 0 18 18"><circle cx="9" cy="9" r="9" fill="#7cb342"/><path d="M4.9 9.5L7.7 11.9L13.3 6.5" fill="none" stroke="#fff" stroke-width="1.7"/></svg>
<svg style="position:absolute;left:1773.00px;top:906.05px" width="14" height="14" viewBox="0 0 14 14"><path fill="#5b2a80" fill-rule="evenodd" d="M12.08 5.48 L13.90 6.17 L13.90 7.83 L12.08 8.52 L11.66 9.52 L12.47 11.29 L11.29 12.47 L9.52 11.66 L8.52 12.08 L7.83 13.90 L6.17 13.90 L5.48 12.08 L4.48 11.66 L2.71 12.47 L1.53 11.29 L2.34 9.52 L1.92 8.52 L0.10 7.83 L0.10 6.17 L1.92 5.48 L2.34 4.48 L1.53 2.71 L2.71 1.53 L4.48 2.34 L5.48 1.92 L6.17 0.10 L7.83 0.10 L8.52 1.92 L9.52 2.34 L11.29 1.53 L12.47 2.71 L11.66 4.48Z M7 5 A2 2 0 1 0 7 9 A2 2 0 1 0 7 5Z"/></svg>
<div class="rowbg" style="top:939px;height:60px"></div>
<div class="t" style="left:213.0px;top:952.6px">Mobile &amp; 3rd Part<br>y</div>
<div class="t" style="left:330.0px;top:960.5px;letter-spacing:0.05px">Active</div>
<div class="t" style="left:431.0px;top:960.5px;letter-spacing:-0.05px">Mobile Gateway</div>
<div class="t" style="left:946.0px;top:960.5px;letter-spacing:-0.13px">@MobileNotifier:0</div>
<div class="t" style="left:1290.0px;top:960.5px;letter-spacing:0.00px">All</div>
<div class="t" style="left:1453.5px;top:960.5px;letter-spacing:0.06px">n/a</div>
<svg style="position:absolute;left:1644px;top:957px" width="20" height="18" viewBox="0 0 20 18"><g fill="none" stroke="#7cb342" stroke-width="1.1"><path d="M10.79 1.44 A7.6 7.6 0 0 1 16.83 5.67"/><path d="M16.83 12.33 A7.6 7.6 0 0 1 10.79 16.56"/><path d="M3.70 13.25 A7.6 7.6 0 0 1 3.70 4.75"/><circle cx="17.60" cy="9.00" r="1.55"/><circle cx="6.43" cy="15.71" r="1.55"/><circle cx="6.43" cy="2.29" r="1.55"/></g></svg>
<svg style="position:absolute;left:1773.00px;top:958.55px" width="14" height="14" viewBox="0 0 14 14"><path fill="#5b2a80" fill-rule="evenodd" d="M12.08 5.48 L13.90 6.17 L13.90 7.83 L12.08 8.52 L11.66 9.52 L12.47 11.29 L11.29 12.47 L9.52 11.66 L8.52 12.08 L7.83 13.90 L6.17 13.90 L5.48 12.08 L4.48 11.66 L2.71 12.47 L1.53 11.29 L2.34 9.52 L1.92 8.52 L0.10 7.83 L0.10 6.17 L1.92 5.48 L2.34 4.48 L1.53 2.71 L2.71 1.53 L4.48 2.34 L5.48 1.92 L6.17 0.10 L7.83 0.10 L8.52 1.92 L9.52 2.34 L11.29 1.53 L12.47 2.71 L11.66 4.48Z M7 5 A2 2 0 1 0 7 9 A2 2 0 1 0 7 5Z"/></svg>
<div id="sb"><div class="abs" style="left:2px;top:13px;width:11px;height:823px;background:#c1c1c1"></div>
<div class="abs" style="left:3.5px;top:4px;width:0;height:0;border-left:4px solid transparent;border-right:4px solid transparent;border-bottom:4px solid #a3a3a3"></div>
<div class="abs" style="left:0;top:964px;width:15px;height:15px;background:#d2d2d2"></div>
<div class="abs" style="left:3.5px;top:969px;width:0;height:0;border-left:4px solid transparent;border-right:4px solid transparent;border-top:4px solid #505050"></div></div>
</body></html>
